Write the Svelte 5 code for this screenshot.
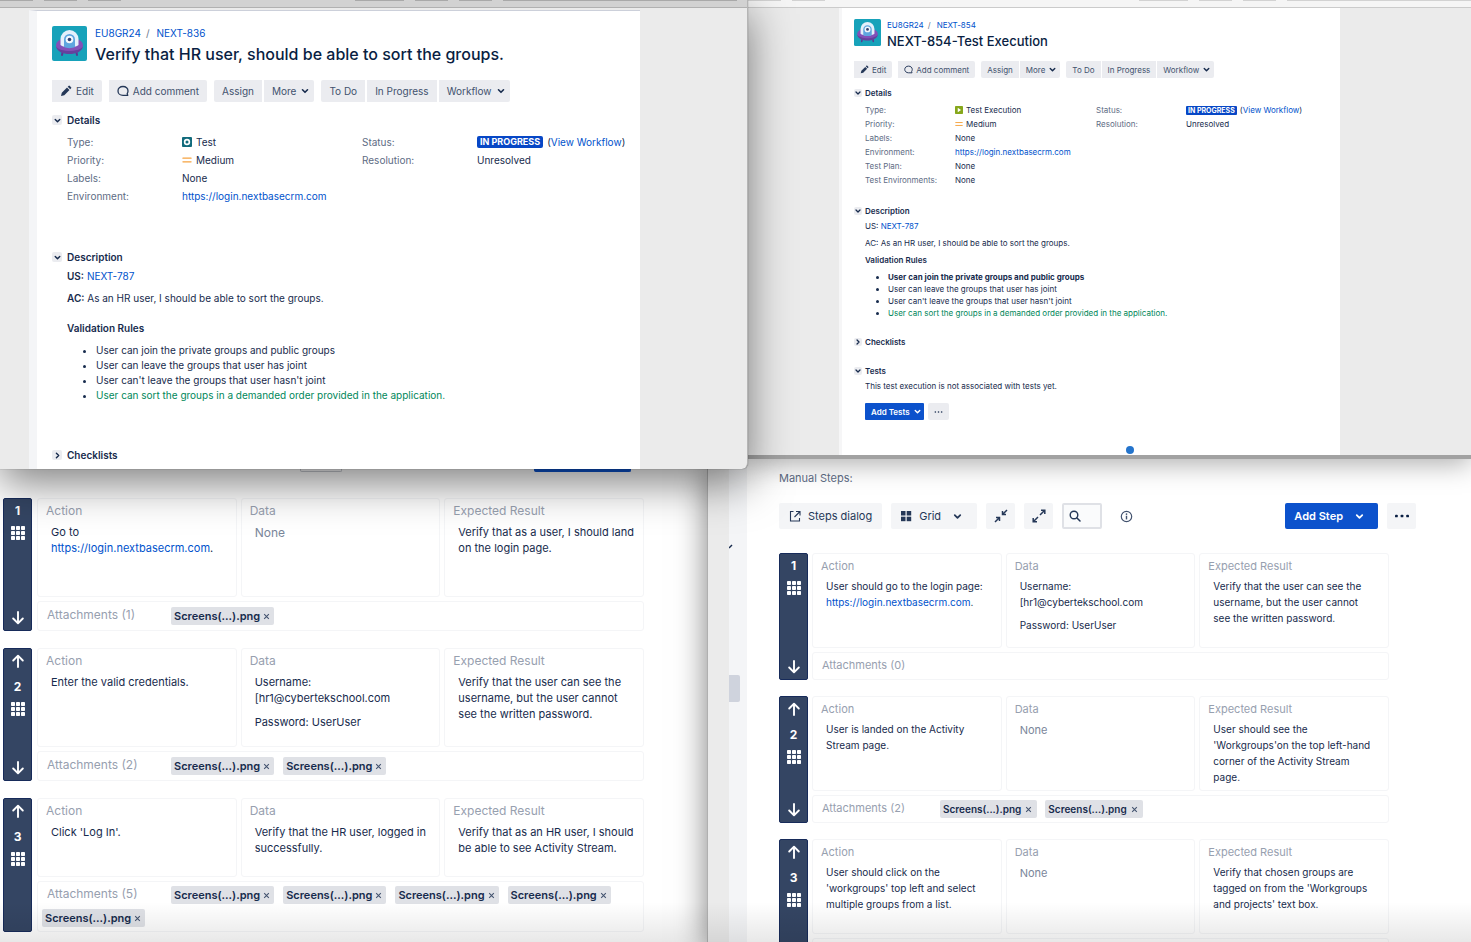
<script>
  const testIssue = {
    key: 'NEXT-836',
    title: 'Verify that HR user, should be able to sort the groups.',
    type: 'Test',
    kind: 'test',
    extra: [],
    boldLabels: true,
    boldFirst: false
  };
  const executionIssue = {
    key: 'NEXT-854',
    title: 'NEXT-854-Test Execution',
    type: 'Test Execution',
    kind: 'execution',
    extra: ['Test Plan:', 'Test Environments:'],
    boldLabels: false,
    boldFirst: true
  };
  const rules = [
    'User can join the private groups and public groups',
    'User can leave the groups that user has joint',
    "User can't leave the groups that user hasn't joint",
    'User can sort the groups in a demanded order provided in the application.'
  ];
  const site = 'https://login.nextbasecrm.com';
  const credentials = ['Username:\n[hr1@cybertekschool.com', 'Password: UserUser'];

  const leftSteps = [
    { action: 'Go to\n', link: true, data: null, result: 'Verify that as a user, I should land on the login page.', files: 1 },
    { action: 'Enter the valid credentials.', data: credentials, result: 'Verify that the user can see the username, but the user cannot see the written password.', files: 2 },
    { action: "Click 'Log In'.", data: ['Verify that the HR user, logged in successfully.'], result: 'Verify that as an HR user, I should be able to see Activity Stream.', files: 5, short: true }
  ];
  const rightSteps = [
    { action: 'User should go to the login page:\n', link: true, data: credentials, result: 'Verify that the user can see the username, but the user cannot see the written password.', files: 0 },
    { action: 'User is landed on the Activity Stream page.', data: null, result: "User should see the 'Workgroups'on the top left-hand corner of the Activity Stream page.", files: 2 },
    { action: "User should click on the 'workgroups' top left and select multiple groups from a list.", data: null, result: "Verify that chosen groups are tagged on from the 'Workgroups and projects' text box.", files: null }
  ];
</script>

{#snippet chevron()}
  <svg class="chev" viewBox="0 0 10 10" aria-hidden="true"><path d="M2.500 3.800 5 6.300 7.500 3.800" fill="none" stroke="currentColor" stroke-width="1.600" stroke-linecap="round" stroke-linejoin="round" /></svg>
{/snippet}

{#snippet section(name, open)}
  <h2>
    <button class="toggle" class:closed={!open} aria-label={name}>{@render chevron()}</button>
    {name}
  </h2>
{/snippet}

{#snippet avatar()}
  <svg class="avatar" viewBox="0 0 35 35" aria-hidden="true">
    <rect width="35" height="35" rx="2" fill="#17a2ba" />
    <path d="m11 24-1 5M24 24l1 5" stroke="#5a3793" stroke-width="2" stroke-linecap="round" />
    <ellipse cx="17.500" cy="19.500" rx="13.500" ry="8" fill="#8350b8" />
    <path d="M4 20.500c2 3 8 4.500 13.500 4.500S29 23.500 31 20.500c-1 5-7 7.500-13.500 7.500S5 25.500 4 20.500Z" fill="#65419d" />
    <path d="M8.500 19v-6a9 9 0 0 1 18 0v6c-3 3-15 3-18 0Z" fill="#e4f0fb" />
    <path d="M12 21v-7.500a5.500 5.500 0 0 1 11 0V21c-3 1.500-8 1.500-11 0Z" fill="#5ea5df" />
    <circle cx="17.500" cy="13.500" r="3.800" fill="#f3f8fd" />
    <circle cx="17.500" cy="13.500" r="1.800" fill="#344172" />
  </svg>
{/snippet}

{#snippet issue(item)}
  <article class="page">
    <header class="head">
      {@render avatar()}
      <div>
        <nav class="crumbs"><a href="#project">EU8GR24</a><span>/</span><a href="#issue">{item.key}</a></nav>
        <h1>{item.title}</h1>
      </div>
    </header>

    <div class="actions">
      <div class="group">
        <button>
          <svg class="ico" viewBox="0 0 12 12" aria-hidden="true"><path d="M1 11 1.800 7.700 7 2.500 9.500 5 4.300 10.200ZM7.700 1.800 8.800.8Q9.300.4 9.800.9L11.100 2.200Q11.600 2.700 11.100 3.200L10.200 4.300Z" fill="currentColor" /></svg>Edit
        </button>
      </div>
      <div class="group">
        <button>
          <svg class="ico" viewBox="0 0 12 12" aria-hidden="true"><path d="M10.200 8.500c.5-.8.800-1.600.8-2.600C11 3.400 9 1.500 6 1.500S1 3.400 1 5.900s2 4.500 5 4.500h4.700Z" fill="none" stroke="currentColor" stroke-width="1.300" stroke-linejoin="round" /></svg>Add comment
        </button>
      </div>
      <div class="group"><button>Assign</button><button class="drop">More {@render chevron()}</button></div>
      <div class="group"><button>To Do</button><button>In Progress</button><button class="drop">Workflow {@render chevron()}</button></div>
    </div>

    <section class="details">
      {@render section('Details', true)}
      <div class="cols">
        <dl>
          <dt>Type:</dt>
          <dd>
            {#if item.kind === 'test'}
              <svg class="type" viewBox="0 0 11 11" aria-hidden="true"><rect width="11" height="11" rx="1" fill="#126b7c" /><circle cx="5.500" cy="5.500" r="2.600" fill="#126b7c" stroke="#fff" stroke-width="1.800" /></svg>
            {:else}
              <svg class="type" viewBox="0 0 11 11" aria-hidden="true"><rect width="11" height="11" rx="1" fill="#86a71b" /><path d="M3.800 2.500 8.300 5.500 3.800 8.500Z" fill="#fff" /></svg>
            {/if}{item.type}
          </dd>
          <dt>Priority:</dt>
          <dd>
            <svg class="type" viewBox="0 0 11 11" aria-hidden="true"><path d="M1 3.500h9M1 7.500h9" stroke="#f6a340" stroke-width="1.300" stroke-linecap="round" /></svg>Medium
          </dd>
          <dt>Labels:</dt>
          <dd>None</dd>
          <dt>Environment:</dt>
          <dd><a href="#site">{site}</a></dd>
          {#each item.extra as label}
            <dt>{label}</dt>
            <dd>None</dd>
          {/each}
        </dl>
        <dl>
          <dt>Status:</dt>
          <dd><span class="lozenge">IN PROGRESS</span><span>(<a href="#workflow">View Workflow</a>)</span></dd>
          <dt>Resolution:</dt>
          <dd>Unresolved</dd>
        </dl>
      </div>
    </section>

    <section class="desc">
      {@render section('Description', true)}
      <div class="text">
        <p><span class:strong={item.boldLabels}>US:</span> <a href="#story">NEXT-787</a></p>
        <p class="ac"><span class:strong={item.boldLabels}>AC:</span> As an HR user, I should be able to sort the groups.</p>
        <h3>Validation Rules</h3>
        <ul>
          {#each rules as rule, i}
            <li class:strong={i === 0 && item.boldFirst} class:green={i === 3}>{rule}</li>
          {/each}
        </ul>
      </div>
    </section>

    <section>{@render section('Checklists', false)}</section>

    {#if item.kind === 'execution'}
      <section class="tests">
        {@render section('Tests', true)}
        <div class="text">
          <p>This test execution is not associated with tests yet.</p>
          <div class="addrow">
            <button class="primary">Add Tests {@render chevron()}</button>
            <button class="dots" aria-label="More">
              <svg viewBox="0 0 10 4" aria-hidden="true"><g fill="currentColor"><circle cx="1.500" cy="2" r=".9" /><circle cx="5" cy="2" r=".9" /><circle cx="8.500" cy="2" r=".9" /></g></svg>
            </button>
          </div>
        </div>
      </section>
    {/if}
  </article>
{/snippet}

{#snippet arrow(down)}
  <button class="move" class:down aria-label={down ? 'Down' : 'Up'}>
    <svg viewBox="0 0 14 14" aria-hidden="true"><path d="M7 13V2M2.200 6.500 7 1.700 11.800 6.500" fill="none" stroke="#fff" stroke-width="1.900" stroke-linecap="round" stroke-linejoin="round" /></svg>
  </button>
{/snippet}

{#snippet steps(list)}
  <ol class="steps">
    {#each list as step, i}
      <li class="step">
        <div class="rail">
          {#if i > 0}{@render arrow(false)}{/if}
          <b>{i + 1}</b>
          <svg class="grip" viewBox="0 0 14 14" aria-hidden="true">
            {#each [0, 5, 10] as y}{#each [0, 5, 10] as x}<rect {x} {y} width="4" height="4" rx=".7" fill="#fff" />{/each}{/each}
          </svg>
          {#if !(i === 2 && step.files)}{@render arrow(true)}{/if}
        </div>
        <div class="body">
          <div class="cells" class:short={step.short}>
            <div class="cell">
              <h4>Action</h4>
              <p>{step.action}{#if step.link}<a href="#site">{site}</a>.{/if}</p>
            </div>
            <div class="cell">
              <h4>Data</h4>
              {#if step.data}
                {#each step.data as line}<p>{line}</p>{/each}
              {:else}
                <p class="none">None</p>
              {/if}
            </div>
            <div class="cell">
              <h4>Expected Result</h4>
              <p>{step.result}</p>
            </div>
          </div>
          <div class="files">
            {#if step.files !== null}
              <span class="count">Attachments ({step.files})</span>
              {#each Array(step.files) as _}
                <span class="chip">Screens(...).png<button aria-label="Remove"><svg viewBox="0 0 6 6" aria-hidden="true"><path d="m1 1 4 4M5 1 1 5" stroke="currentColor" stroke-width=".9" /></svg></button></span>
              {/each}
            {/if}
          </div>
        </div>
      </li>
    {/each}
  </ol>
{/snippet}

<main class="desktop">
  <section class="window left-steps">
    <div class="edge"><i></i><i class="blue"></i></div>
    {@render steps(leftSteps)}
  </section>

  <section class="window right-steps">
    <div class="margin"></div>
    <aside>
      <svg viewBox="0 0 4 6" aria-hidden="true"><path d="M0 4 3 1" stroke="#172b4d" stroke-width="1.500" /></svg>
      <i></i>
    </aside>
    <div class="panel">
      <p class="caption">Manual Steps:</p>
      <div class="bar">
        <button class="dialog">
          <svg viewBox="0 0 12 12" aria-hidden="true"><path d="M4.500 1.500H1.500V11H10.500V8M7 1.500h4v4M11 1.500 5.500 7" fill="none" stroke="currentColor" stroke-width="1.100" /></svg>Steps dialog
        </button>
        <button class="view">
          <svg viewBox="0 0 12 12" aria-hidden="true"><g fill="currentColor"><rect x="1" y="1" width="4.500" height="4.500" /><rect x="6.700" y="1" width="4.500" height="4.500" /><rect x="1" y="6.700" width="4.500" height="4.500" /><rect x="6.700" y="6.700" width="4.500" height="4.500" /></g></svg>Grid {@render chevron()}
        </button>
        <button class="square" aria-label="Collapse">
          <svg viewBox="0 0 14 14" aria-hidden="true"><path d="M13 1 8.500 5.500M8.500 2v3.500H12M1 13l4.500-4.500M5.500 12V8.500H2" fill="none" stroke="currentColor" stroke-width="1.500" /></svg>
        </button>
        <button class="square" aria-label="Expand">
          <svg viewBox="0 0 14 14" aria-hidden="true"><path d="M8 6l4.500-4.500M9 1.200h3.800V5M6 8l-4.500 4.500M5 12.800H1.200V9" fill="none" stroke="currentColor" stroke-width="1.500" /></svg>
        </button>
        <label class="search">
          <svg viewBox="0 0 12 12" aria-hidden="true"><circle cx="5" cy="5" r="3.800" fill="none" stroke="currentColor" stroke-width="1.400" /><path d="m8 8 3 3" stroke="currentColor" stroke-width="1.500" stroke-linecap="round" /></svg>
          <input type="search" aria-label="Search" />
        </label>
        <svg class="info" viewBox="0 0 12 12" aria-hidden="true"><circle cx="6" cy="6" r="4.800" fill="none" stroke="#42526e" stroke-width="1.100" /><path d="M6 5.300v3.400" stroke="#42526e" stroke-width="1.300" /><circle cx="6" cy="3.700" r=".8" fill="#42526e" /></svg>
        <button class="primary add">Add Step {@render chevron()}</button>
        <button class="square" aria-label="More">
          <svg viewBox="0 0 14 14" aria-hidden="true"><g fill="#091e42"><rect x="0" y="5.700" width="2.800" height="2.600" rx=".9" /><rect x="5.600" y="5.700" width="2.800" height="2.600" rx=".9" /><rect x="11.200" y="5.700" width="2.800" height="2.600" rx=".9" /></g></svg>
        </button>
      </div>
      {@render steps(rightSteps)}
    </div>
  </section>

  <section class="window execution">
    <div class="chrome"><i></i><i></i><i class="push"></i><i></i><i></i><i class="wide"></i></div>
    {@render issue(executionIssue)}
    <span class="pointer"></span>
  </section>

  <section class="window test">
    <div class="chrome"><i></i><i></i><i></i><i class="push"></i><i></i><i></i><i class="wide"></i></div>
    {@render issue(testIssue)}
  </section>

  <div class="shade"></div>
</main>

<style>
  :global(body) { background: #fff; }
  .desktop, .desktop * { box-sizing: border-box; }
  .desktop {
    position: relative;
    height: 100vh;
    min-height: 942px;
    overflow: hidden;
    background: #fff;
    color: #172b4d;
    font-family: Inter, "Liberation Sans", sans-serif;
  }
  h1, h2, h3, h4, p, ul, ol, dl, dd { margin: 0; padding: 0; }
  ol { list-style: none; }
  a { color: #0052cc; text-decoration: none; }
  button { font: inherit; color: inherit; border: 0; padding: 0; margin: 0; background: none; white-space: nowrap; }
  svg { display: block; flex: none; }
  .chev { width: 10px; height: 10px; }
  .strong { font-weight: 600; }
  .window { position: absolute; overflow: hidden; background: #fff; }

  /* window placement on the desktop */
  .test {
    left: 0; top: 0; width: 748px; height: 469px;
    background: #ebebeb;
    border-right: 1px solid #b5b5b5;
    border-radius: 0 0 6px 0;
    box-shadow: 0 0 1px rgba(0, 0, 0, .6), 0 14px 44px rgba(0, 0, 0, .5);
  }
  .execution {
    left: 748px; right: 0; top: 0; height: 459px;
    background: #ebebeb;
    border-bottom: 4px solid #a2a2a2;
    box-shadow: 0 4px 26px rgba(0, 0, 0, .34);
  }
  .left-steps { left: 0; top: 469px; bottom: 0; width: 708px; padding: 0 64px 0 3px; }
  .right-steps {
    left: 707px; right: 0; top: 459px; bottom: 0;
    display: flex;
    border-left: 1px solid #b0b0b0;
    box-shadow: 0 8px 30px rgba(0, 0, 0, .5);
  }
  .shade { position: absolute; left: 0; right: 0; bottom: 0; height: 40px; background: linear-gradient(transparent, rgba(0, 0, 0, .09)); pointer-events: none; }

  .chrome { display: flex; gap: 11px; height: 8px; border-bottom: 1px solid #b1b1b1; background: #d2d2d2; padding-right: 10px; }
  .chrome i { width: 33px; height: 1px; background: #a9a9a9; }
  .chrome .push { margin-left: auto; width: 49px; }
  .chrome .wide { width: 234px; }
  .execution .chrome { background: #f5f5f5; border-color: #cbcbcb; padding-right: 0; }
  .execution .chrome i { background: #d2d2d2; }
  .execution .chrome .wide { width: 184px; }

  /* issue view */
  .page { display: flex; flex-direction: column; background: #fff; }
  .test .page { margin: 2px 107px 0 29px; border-left: 8px solid #f4f5f7; border-top: 1px solid #ccd0da; padding: 15px 16px 0 15px; height: 459px; font-size: 10px; }
  .execution .page { margin: 0 131px 0 91px; border-left: 3px solid #f6f6f7; padding: 11px 12px 0; height: 447px; font-size: 8px; }

  .head { display: flex; gap: 8px; }
  .avatar { width: 35px; height: 35px; }
  .crumbs { display: flex; gap: 5px; line-height: 14px; }
  .crumbs span { color: #6b778c; margin-right: 2px; }
  .test .crumbs { font-size: 10px; }
  h1 { font-size: 16px; font-weight: 500; line-height: 28px; color: #091e42; white-space: nowrap; }
  .head { height: 40px; }
  .execution .head { gap: 6px; height: 32px; }
  .execution .avatar { width: 27px; height: 27px; }
  .execution .crumbs { gap: 4px; line-height: 12px; }
  .execution h1 { font-size: 13px; line-height: 20px; }

  .actions { display: flex; gap: 7px; margin-top: 14px; color: #42526e; }
  .group { display: flex; gap: 2px; }
  .group button { display: flex; align-items: center; gap: 4px; height: 22px; padding: 0 8px; background: #ebecf0; }
  .group .drop { padding-right: 4px; }
  .group button:first-child { border-radius: 2px 0 0 2px; }
  .group button:last-child { border-radius: 0 2px 2px 0; }
  .group .chev { color: #172b4d; }
  .ico { width: 12px; height: 12px; color: #253858; }
  .execution .actions { gap: 6px; margin-top: 10px; }
  .execution .group { gap: 1px; }
  .execution .group button { height: 17px; padding: 0 6px; gap: 3px; }
  .execution .group .drop { padding-right: 3px; }
  .execution .ico, .execution .chev { width: 9px; height: 9px; }

  h2 { display: flex; align-items: center; gap: 5px; font-size: 10px; font-weight: 600; line-height: 14px; color: #172b4d; }
  .toggle { display: grid; place-items: center; width: 10px; height: 10px; border-radius: 2px; background: #ebecf0; }
  .toggle .chev { width: 9px; height: 9px; }
  .closed .chev { transform: rotate(-90deg); }
  .execution h2 { font-size: 8px; gap: 3px; line-height: 12px; }
  .execution .toggle { width: 8px; height: 8px; }
  .execution .toggle .chev { width: 8px; height: 8px; }

  .cols { display: grid; grid-template-columns: 295px 1fr; padding-left: 15px; }
  dl { display: grid; grid-template-columns: 115px 1fr; grid-auto-rows: 18px; align-items: center; align-content: start; white-space: nowrap; }
  dt { color: #5e6c84; }
  dd { display: flex; align-items: center; gap: 4px; }
  .type { width: 10px; height: 10px; }
  .lozenge { padding: 0 3px; border-radius: 2px; background: #0747c6; color: #fff; font-size: 9px; font-weight: 700; line-height: 12px; }
  .details { margin-top: 11px; }
  .test .details .cols { margin-top: 6px; }
  .execution .details { margin-top: 9px; }
  .execution .cols { grid-template-columns: 231px 1fr; padding-left: 11px; margin-top: 4px; }
  .execution dl { grid-template-columns: 90px 1fr; grid-auto-rows: 14px; }
  .execution dd { gap: 3px; }
  .execution .type { width: 8px; height: 8px; }
  .execution .lozenge { padding: 0 2px; font-size: 7px; line-height: 9px; border-radius: 1px; }

  .text { padding-left: 15px; }
  .text p { line-height: 14px; }
  .desc { margin-top: 45px; }
  .desc .text { padding-top: 5px; }
  .desc .ac { margin-top: 8px; }
  h3 { margin-top: 16px; font-size: 10px; font-weight: 600; line-height: 14px; }
  ul { margin: 8px 0 45px; padding-left: 29px; line-height: 15px; white-space: nowrap; }
  .green { color: #00875a; }
  .green::marker { color: #172b4d; }
  .execution .text { padding-left: 11px; }
  .execution .text p { line-height: 12px; }
  .execution .desc { margin-top: 18px; }
  .execution .desc .text { padding-top: 3px; }
  .execution .desc .ac { margin-top: 5px; }
  .execution h3 { margin-top: 5px; font-size: 8px; line-height: 12px; }
  .execution ul { margin: 5px 0 17px; padding-left: 23px; line-height: 12px; }
  .execution li.strong { font-weight: 700; }
  .tests { margin-top: 17px; }
  .tests .text { padding-top: 3px; }
  .addrow { display: flex; gap: 4px; margin-top: 11px; }
  .primary { display: flex; align-items: center; background: #0c52cc; color: #fff; font-weight: 600; border-radius: 2px; }
  .addrow .primary { height: 17px; gap: 3px; padding: 0 2px 0 6px; border-radius: 1px; }
  .dots { display: grid; place-items: center; width: 21px; height: 17px; background: #ebecf0; border-radius: 2px; }
  .dots svg { width: 9px; height: 4px; }
  .pointer { position: absolute; left: 378px; bottom: 1px; width: 8px; height: 8px; border-radius: 50%; background: #2474cc; }

  /* manual steps */
  .steps { display: flex; flex-direction: column; gap: 17px; }
  .step { display: grid; grid-template-columns: 29px 1fr; gap: 5px; }
  .rail { display: flex; flex-direction: column; align-items: center; background: #344563; border: 1px solid #172b5a; border-radius: 2px; color: #fff; padding: 5px 0; }
  .rail b { font-size: 12px; font-weight: 700; line-height: 14px; }
  .grip { width: 14px; height: 14px; margin-top: 8px; }
  .move { width: 14px; height: 14px; margin-bottom: 12px; }
  .move svg { width: 14px; height: 14px; }
  .down { margin: auto 0 0; transform: rotate(180deg); }
  .body { display: flex; flex-direction: column; gap: 4px; min-width: 0; }
  .cells { display: grid; grid-template-columns: repeat(3, 1fr); gap: 4px; min-height: 99px; }
  .short { min-height: 79px; }
  .cell, .files { border: 1px solid #f4f5f7; border-radius: 3px; }
  .cell { padding: 5px 8px; min-width: 0; }
  h4 { font-size: 12px; font-weight: 400; line-height: 14px; color: #97a0af; }
  .cell p { margin: 6px 0 0 5px; font-size: 11px; line-height: 16px; white-space: pre-line; }
  .cell p + p { margin-top: 8px; }
  .cell .none { font-size: 12px; line-height: 18px; color: #7a869a; }
  .files { display: flex; flex-wrap: wrap; align-items: center; gap: 5px 9px; min-height: 30px; padding: 4px; }
  .count { width: 120px; padding: 0 0 3px 5px; font-size: 12px; line-height: 14px; color: #97a0af; white-space: nowrap; }
  .chip { display: flex; align-items: center; gap: 3px; height: 18px; padding: 0 4px 0 3px; border-radius: 2px; background: #dfe1e6; color: #172b4d; font-size: 11px; font-weight: 600; white-space: nowrap; }
  .chip button { color: #42526e; }
  .chip svg { width: 7px; height: 7px; }

  .edge { display: flex; height: 3px; margin-bottom: 26px; padding: 0 13px 0 297px; justify-content: space-between; }
  .edge i { width: 42px; height: 3px; background: #fafbfc; border: 1px solid #c6c9d0; border-top: 0; border-radius: 0 0 2px 2px; }
  .edge .blue { width: 97px; background: #0c52cc; border-color: #0c52cc; }

  .margin { width: 21px; background: #ebebeb; }
  aside { display: flex; flex-direction: column; width: 18px; background: #f4f5f7; padding-top: 85px; }
  aside svg { width: 4px; height: 6px; }
  aside i { width: 11px; height: 27px; margin-top: 125px; background: #cfd3dd; border-radius: 0 2px 2px 0; }
  .panel { flex: 1; min-width: 0; padding: 12px 82px 0 32px; }
  .caption { font-size: 11px; line-height: 14px; color: #5e6c84; }
  .bar { display: flex; align-items: center; margin: 18px -27px 24px 0; gap: 9px; font-size: 11px; }
  .bar button { display: flex; align-items: center; height: 26px; background: #f4f5f7; border-radius: 2px; color: #253858; }
  .bar .dialog { gap: 7px; padding: 0 10px; }
  .dialog svg, .view > svg:first-child { width: 12px; height: 12px; }
  .bar .view { gap: 7px; padding: 0 14px 0 9px; }
  .view .chev { margin-left: 4px; }
  .bar .chev { width: 11px; height: 11px; }
  .bar .square { width: 29px; justify-content: center; }
  .square svg { width: 14px; height: 14px; }
  .search { display: flex; align-items: center; width: 40px; height: 26px; padding-left: 5px; border: 2px solid #dfe1e6; border-radius: 2px; background: #fafbfc; color: #253858; }
  .search svg { width: 12px; height: 12px; }
  .search input { width: 18px; border: 0; padding: 0; background: none; outline: 0; }
  .info { width: 13px; height: 13px; margin-left: 9px; }
  .bar .add { margin-left: auto; gap: 11px; padding: 0 13px 0 9px; background: #0c52cc; color: #fff; }
  .right-steps .steps { gap: 16px; }
  .right-steps .step { gap: 4px; }
  .right-steps .cells { min-height: 95px; }
  .right-steps h4 { font-size: 11px; }
  .right-steps .files { min-height: 28px; gap: 5px 8px; }
  .right-steps .count { width: 115px; font-size: 11px; }
  .right-steps .chip { font-size: 10px; gap: 4px; padding-right: 5px; }
  .right-steps .cell { padding-right: 12px; }
  .right-steps .cell p { margin-top: 5px; font-size: 10px; }
  .right-steps .cell p + p { margin-top: 7px; }
  .right-steps .cell .none { font-size: 11px; }
</style>
